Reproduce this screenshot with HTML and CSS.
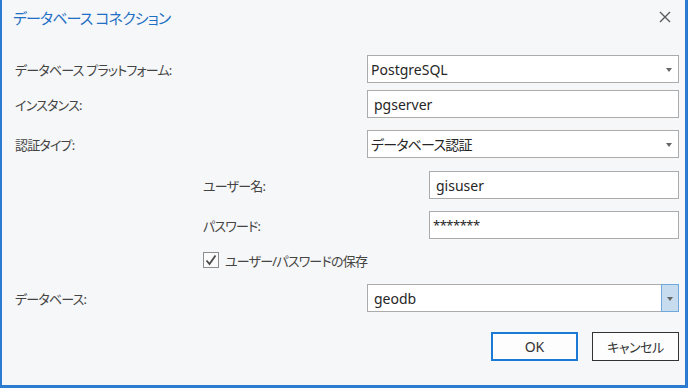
FILE: index.html
```html
<!DOCTYPE html>
<html lang="ja">
<head>
    <meta charset="UTF-8">
    <title>データベース コネクション</title>
    <link rel="stylesheet" href="styles.css">
</head>
<body>
    <div class="dialog">
        <div class="titlebar">
            <span class="title">データベース コネクション</span>
            <span class="close">
                <svg width="12" height="12" viewBox="0 0 12 12">
                    <path d="M1 1 L11 11 M11 1 L1 11" stroke="#5a5a5a" stroke-width="1.4" fill="none"/>
                </svg>
            </span>
        </div>

        <div class="form">
            <div class="row r1">
                <span class="label">データベース プラットフォーム:</span>
                <div class="field combo">PostgreSQL<span class="arrow"></span></div>
            </div>
            <div class="row r2">
                <span class="label">インスタンス:</span>
                <div class="field text">pgserver</div>
            </div>
            <div class="row r3">
                <span class="label">認証タイプ:</span>
                <div class="field combo ja">データベース認証<span class="arrow"></span></div>
            </div>
            <div class="row sub r4">
                <span class="label">ユーザー名:</span>
                <div class="field text short">gisuser</div>
            </div>
            <div class="row sub r5">
                <span class="label">パスワード:</span>
                <div class="field text short pwd">*******</div>
            </div>
            <div class="check-row">
                <span class="checkbox">
                    <svg width="14" height="14" viewBox="0 0 14 14">
                        <path d="M2.5 7.5 L5.5 11 L11.5 2.5" stroke="#4a4a4a" stroke-width="1.8" fill="none"/>
                    </svg>
                </span>
                <span class="check-label">ユーザー/パスワードの保存</span>
            </div>
            <div class="row r6">
                <span class="label">データベース:</span>
                <div class="field editable">
                    <span class="value">geodb</span>
                    <span class="drop"><span class="arrow"></span></span>
                </div>
            </div>
        </div>

        <div class="buttons">
            <button class="btn ok">OK</button>
            <button class="btn cancel">キャンセル</button>
        </div>
    </div>
</body>
</html>
```

FILE: styles.css
```css
html, body {
    margin: 0;
    padding: 0;
    background: #f6f7f8;
    font-family: "Noto Sans", "Noto Sans CJK JP", sans-serif;
    font-feature-settings: "palt";
    color: #333;
}
.dialog {
    width: 688px;
    height: 388px;
    box-sizing: border-box;
    background: #f6f7f8;
    border-left: 2px solid #2b7bd0;
    border-right: 3px solid #2b7bd0;
    border-bottom: 3px solid #2b7bd0;
    position: relative;
}
.titlebar {
    height: 34px;
    display: flex;
    align-items: center;
    justify-content: space-between;
    padding: 0 14px 0 11px;
}
.title {
    font-size: 15px;
    letter-spacing: -0.9px;
    color: #1f6fc4;
}
.close {
    display: flex;
    width: 12px;
    height: 12px;
}
.form {
    padding: 21px 6px 0 13px;
}
.row {
    display: flex;
    align-items: center;
    justify-content: space-between;
    height: 28px;
}
.label,
.check-label,
.ja {
    font-size: 13px;
    letter-spacing: -0.8px;
    color: #444;
}
.r2 { margin-top: 7px; }
.r3 { margin-top: 12px; }
.r4 { margin-top: 13px; }
.r5 { margin-top: 12px; }
.r6 { margin-top: 16px; }
.sub {
    padding-left: 188px;
}
.field {
    width: 312px;
    height: 28px;
    box-sizing: border-box;
    border: 1px solid #ababab;
    background: #fff;
    font-size: 14px;
    color: #262626;
    display: flex;
    align-items: center;
    position: relative;
}
.field.ja {
    color: #262626;
}
.combo {
    padding-left: 3px;
}
.text {
    padding-left: 6px;
}
.short {
    width: 250px;
}
.pwd {
    padding-left: 3px;
    font-size: 13px;
    letter-spacing: -0.5px;
}
.arrow {
    position: absolute;
    right: 6px;
    top: 12px;
    width: 0;
    height: 0;
    border-left: 3px solid transparent;
    border-right: 3px solid transparent;
    border-top: 4px solid #666;
}
.check-row {
    display: flex;
    align-items: center;
    margin-top: 13px;
    padding-left: 188px;
    height: 16px;
}
.checkbox {
    width: 16px;
    height: 16px;
    box-sizing: border-box;
    border: 1px solid #8e8e8e;
    background: #fbfbfb;
    display: flex;
    align-items: center;
    justify-content: center;
}
.check-label {
    margin-left: 6px;
}
.editable {
    padding-left: 6px;
}
.value {
    flex: 1;
}
.drop {
    width: 18px;
    height: 28px;
    margin: -1px -1px -1px 0;
    box-sizing: border-box;
    border: 1px solid #6fa8dc;
    background: #c7dcef;
    position: relative;
}
.drop .arrow {
    right: 5px;
    top: 12px;
}
.buttons {
    display: flex;
    justify-content: flex-end;
    gap: 14px;
    padding: 20px 6px 0 0;
}
.btn {
    width: 87px;
    height: 29px;
    box-sizing: border-box;
    border: 1px solid #333;
    background: #fdfdfd;
    font-family: "Noto Sans", "Noto Sans CJK JP", sans-serif;
    font-feature-settings: "palt";
    font-size: 14px;
    color: #333;
    padding: 0;
}
.cancel {
    font-size: 13px;
    letter-spacing: -0.5px;
}
.ok {
    border: 2px solid #1a7ad4;
}
```
